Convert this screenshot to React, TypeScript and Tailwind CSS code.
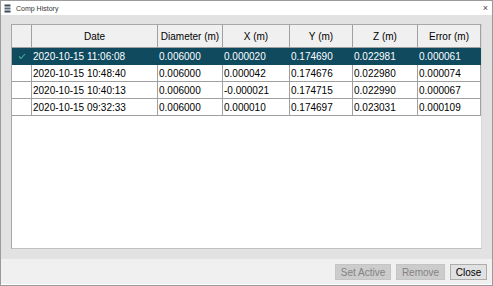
import React from "react";

const rows = [
  ["2020-10-15 11:06:08", "0.006000", "0.000020", "0.174690", "0.022981", "0.000061"],
  ["2020-10-15 10:48:40", "0.006000", "0.000042", "0.174676", "0.022980", "0.000074"],
  ["2020-10-15 10:40:13", "0.006000", "-0.000021", "0.174715", "0.022990", "0.000067"],
  ["2020-10-15 09:32:33", "0.006000", "0.000010", "0.174697", "0.023031", "0.000109"],
];

const headers = ["Date", "Diameter (m)", "X (m)", "Y (m)", "Z (m)", "Error (m)"];

const cols = "grid grid-cols-[20px_126px_65px_67px_63px_65px_63px]";

export default function App() {
  return (
    <div className="w-[493px] h-[286px] border border-[#9b9b9b] flex flex-col bg-[#f0f0f0] font-['Liberation_Sans',Arial,sans-serif] text-black overflow-hidden">
      {/* title bar */}
      <div className="h-[14px] bg-white flex items-center pl-[3px] pr-[4px] shrink-0">
        <svg width="7" height="9" viewBox="0 0 7 9" className="mr-[5px]">
          <rect x="0.5" y="0.5" width="6" height="2" fill="#3b4a5a" />
          <rect x="0.5" y="3.5" width="6" height="2" fill="#5a6a7a" />
          <rect x="0.5" y="6.5" width="6" height="2" fill="#3b4a5a" />
        </svg>
        <span className="text-[7px] text-[#333] leading-none">Comp History</span>
        <span className="ml-auto text-[9px] leading-none text-[#444]">×</span>
      </div>

      {/* body */}
      <div className="flex-1 bg-[#e2e2e2] px-[10px] pt-[9px] pb-[10px] flex">
        <div className="flex-1 bg-white border border-[#a8a8a8] border-r-[#d8d8d8] border-b-[#c0c0c0]">
          <div className={`${cols} h-[23px] bg-[#f0f0f0] text-[10px]`}>
            <div className="border-r border-b border-[#a0a0a0]" />
            {headers.map((h) => (
              <div
                key={h}
                className="border-r border-b border-[#a0a0a0] flex items-center justify-center"
              >
                {h}
              </div>
            ))}
          </div>
          {rows.map((r, i) => {
            const sel = i === 0;
            return (
              <div
                key={i}
                className={`${cols} h-[17px] text-[10px] ${sel ? "bg-[#0f4a5f] text-white" : ""}`}
              >
                <div className={`flex items-center justify-center border-r ${sel ? "border-[#0f4a5f]" : "border-b border-[#a0a0a0]"}`}>
                  {sel && (
                    <svg width="8" height="7" viewBox="0 0 8 7">
                      <path d="M1 3.5 L3 5.5 L7 1" stroke="#44b09c" strokeWidth="1.1" fill="none" />
                    </svg>
                  )}
                </div>
                {r.map((c, j) => (
                  <div
                    key={j}
                    className={`flex items-center pl-[1px] border-r ${sel ? "border-[#0f4a5f]" : "border-b border-[#a0a0a0]"}`}
                  >
                    {c}
                  </div>
                ))}
              </div>
            );
          })}
        </div>
      </div>

      {/* bottom bar */}
      <div className="h-[26px] shrink-0 bg-[#f0f0f0] border-b border-white flex items-center justify-end pr-[5px] gap-[5px] text-[10px]">
        <button className="w-[56px] h-[16px] bg-[#cccccc] text-[#838383] border border-[#c4c4c4]">Set Active</button>
        <button className="w-[49px] h-[16px] bg-[#cccccc] text-[#838383] border border-[#c4c4c4]">Remove</button>
        <button className="w-[37px] h-[16px] bg-[#e1e1e1] text-black border border-[#adadad]">Close</button>
      </div>
    </div>
  );
}
